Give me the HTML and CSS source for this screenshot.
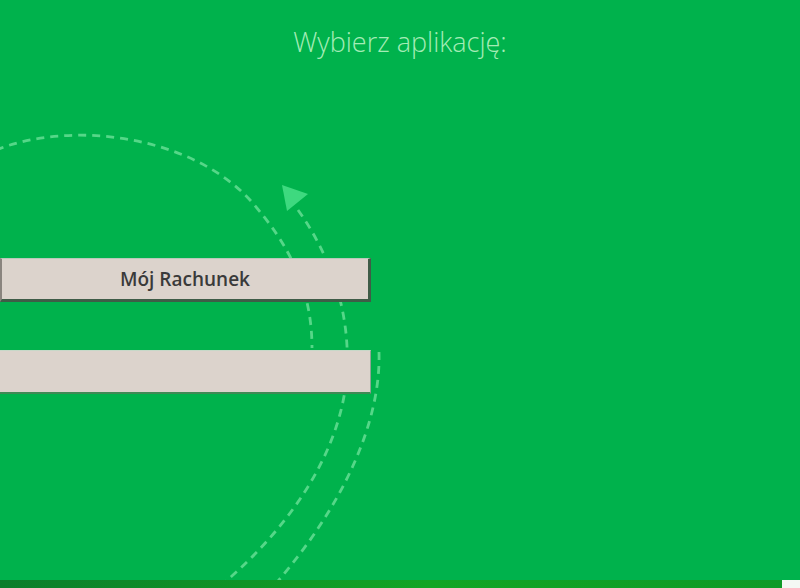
FILE: index.html
```html
<!DOCTYPE html>
<html lang="pl">
<head>
    <meta charset="UTF-8">
    <meta name="viewport" content="width=device-width, initial-scale=1.0">
    <title>Wybierz aplikację</title>
    <link rel="stylesheet" href="styles.css">
</head>
<body>
    <!-- Decorative dashed arrows behind the buttons -->
    <svg class="deco" width="800" height="588" viewBox="0 0 800 588">
        <g fill="none" stroke="#55d788" stroke-width="2.8" stroke-dasharray="8 6">
            <path d="M -4 150 C 70 120, 190 135, 250 200 C 290 245, 312 290, 312 348"/>
            <path d="M 298 210 C 330 255, 350 310, 347 370 C 344 440, 300 520, 218 588"/>
            <path d="M 379 352 C 381 420, 345 505, 272 588"/>
        </g>
        <polygon points="282,185 308,194 287,211" fill="#3ed97f"/>
    </svg>

    <div class="page">
        <h1 class="title">Wybierz aplikację:</h1>

        <div class="apps">
            <button class="app-btn app-btn-first" type="button">Mój Rachunek</button>
            <button class="app-btn app-btn-second" type="button"></button>
        </div>

        <div class="footer">
            <div class="footer-bar"></div>
            <div class="footer-end"></div>
        </div>
    </div>
</body>
</html>
```

FILE: styles.css
```css
body {
    margin: 0;
    height: 588px;
    overflow: hidden;
    background-color: #00b24c;
    font-family: "Open Sans", Arial, sans-serif;
    position: relative;
}
.deco {
    position: absolute;
    top: 0;
    left: 0;
    z-index: 0;
}
.page {
    position: relative;
    z-index: 1;
    height: 588px;
    display: flex;
    flex-direction: column;
}
.title {
    margin: 0;
    padding-top: 25px;
    text-align: center;
    font-size: 27px;
    line-height: 34px;
    font-weight: 300;
    color: #a4ecb6;
}
.apps {
    padding-top: 199px;
    display: flex;
    flex-direction: column;
    gap: 48px;
}
.app-btn {
    width: 371px;
    height: 44px;
    box-sizing: border-box;
    background-color: #dcd3cc;
    font-family: "Open Sans", Arial, sans-serif;
    font-size: 19px;
    font-weight: 600;
    color: #3a3a3a;
    padding: 0;
    cursor: pointer;
}
.app-btn-first {
    border: none;
    border-left: 2px solid #8a847e;
    border-top: 1px solid #b9c9bb;
    border-right: 3px solid #3f5c47;
    border-bottom: 3px solid #3f5c47;
}
.app-btn-second {
    border: none;
    border-top: 1px solid #c7d8c8;
    border-right: 1px solid #8fa595;
    border-bottom: 2px solid #3f8a55;
}
/* Bottom strip */
.footer {
    margin-top: auto;
    height: 8px;
    display: flex;
}
.footer-bar {
    flex: 1;
    background: linear-gradient(to right, #0b7d2b, #12a524 55%, #0e9a27);
}
.footer-end {
    width: 18px;
    background-color: #f4f8f4;
}
```
